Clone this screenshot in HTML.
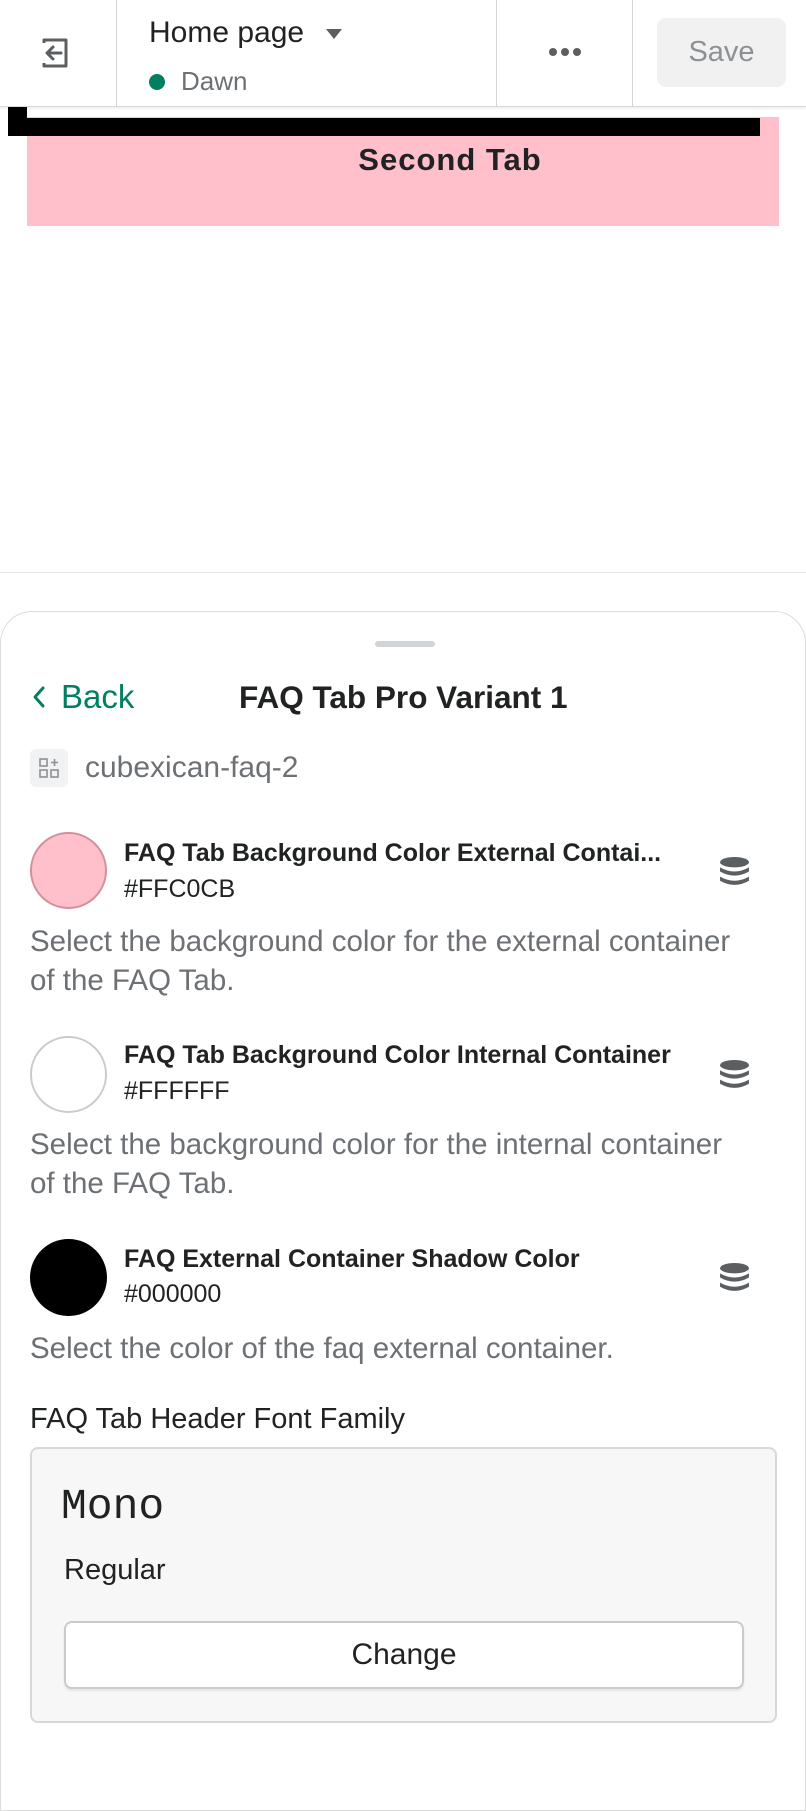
<!DOCTYPE html>
<html><head><meta charset="utf-8"><style>
*{margin:0;padding:0;box-sizing:border-box}
body{width:806px;height:1748px;position:relative;background:#fff;font-family:"Liberation Sans",Arial,sans-serif;overflow:hidden;color:#202223}
.a{position:absolute;white-space:nowrap}
.vl{position:absolute;top:0;width:1px;height:107px;background:#d2d5d8}
.t{font-size:25px;font-weight:bold;color:#202223;line-height:30px}
.h{font-size:25px;color:#202223;line-height:30px}
.d{font-size:29.5px;color:#6d7175;line-height:39px}
.sw{position:absolute;left:30px;width:77px;height:77px;border-radius:50%}
</style></head><body>
<!-- header -->
<div class="a" style="left:0;top:0;width:806px;height:107px;border-bottom:1px solid #d9d9d9;box-shadow:0 1px 3px rgba(0,0,0,.1);background:#fff;z-index:2"></div>
<div class="vl" style="left:116px;z-index:3"></div>
<div class="vl" style="left:496px;z-index:3"></div>
<div class="vl" style="left:632px;z-index:3"></div>
<svg class="a" style="left:40px;top:37px;z-index:3" width="32" height="32" viewBox="0 0 32 32"><path d="M4 6 V3 H26 V29 H4 V26" fill="none" stroke="#5c5f62" stroke-width="3" stroke-linejoin="round"/><path d="M21 16 H8 M13 10 L7 16 L13 22" fill="none" stroke="#5c5f62" stroke-width="3" stroke-linecap="round" stroke-linejoin="round"/></svg>
<div class="a" style="left:149px;top:16px;font-size:30px;line-height:34px;z-index:3">Home page</div>
<svg class="a" style="left:326px;top:29px;z-index:3" width="16" height="10"><path d="M0 0 H16 L8 10Z" fill="#5c5f62"/></svg>
<div class="a" style="left:149px;top:74px;width:16px;height:16px;border-radius:50%;background:#008060;z-index:3"></div>
<div class="a" style="left:181px;top:66px;font-size:26px;line-height:30px;color:#6d7175;z-index:3">Dawn</div>
<svg class="a" style="left:548px;top:47px;z-index:3" width="34" height="10"><circle cx="5" cy="5" r="4" fill="#5c5f62"/><circle cx="17" cy="5" r="4" fill="#5c5f62"/><circle cx="29" cy="5" r="4" fill="#5c5f62"/></svg>
<div class="a" style="left:657px;top:18px;width:129px;height:69px;background:#f1f1f1;border-radius:9px;font-size:29px;color:#8c9196;text-align:center;line-height:69px;z-index:3">Save</div>
<!-- preview -->
<div class="a" style="left:27px;top:117px;width:752px;height:109px;background:#ffc0cb"></div>
<div class="a" style="left:8px;top:107px;width:19px;height:28px;background:#000;z-index:3"></div>
<div class="a" style="left:8px;top:118px;width:752px;height:18px;background:#000"></div>
<div class="a" style="left:0;top:142px;width:900px;text-align:center;font-size:31px;font-weight:bold;letter-spacing:1px;line-height:36px">Second Tab</div>
<div class="a" style="left:0;top:572px;width:806px;height:1px;background:#e1e3e5"></div>
<!-- panel -->
<div class="a" style="left:0;top:611px;width:806px;height:1200px;border:1px solid #dcdcdc;border-radius:32px 32px 0 0;background:#fff"></div>
<div class="a" style="left:375px;top:641px;width:60px;height:6px;border-radius:3px;background:#d2d5d8"></div>
<svg class="a" style="left:32px;top:685px" width="14" height="24"><path d="M11 3 L3 12 L11 21" fill="none" stroke="#008060" stroke-width="3" stroke-linecap="round" stroke-linejoin="round"/></svg>
<div class="a" style="left:61px;top:678px;font-size:33px;line-height:38px;color:#008060">Back</div>
<div class="a" style="left:239px;top:678px;font-size:31.5px;font-weight:bold;line-height:38px">FAQ Tab Pro Variant 1</div>
<div class="a" style="left:30px;top:749px;width:38px;height:38px;border-radius:6px;background:#f1f2f4"></div>
<svg class="a" style="left:38px;top:757px" width="22" height="22" viewBox="0 0 22 22"><g fill="none" stroke="#8c9196" stroke-width="1.6"><rect x="2" y="2" width="7" height="7"/><rect x="2" y="13" width="7" height="7"/><rect x="13" y="13" width="7" height="7"/><path d="M16.5 2 V9 M13 5.5 H20"/></g></svg>
<div class="a" style="left:85px;top:750px;font-size:30px;line-height:36px;color:#6d7175">cubexican-faq-2</div>
<!-- swatch 1 -->
<div class="sw" style="top:832px;background:#ffc0cb;border:2px solid #d38f9b"></div>
<div class="a t" style="left:124px;top:838px">FAQ Tab Background Color External Contai...</div>
<div class="a h" style="left:124px;top:874px">#FFC0CB</div>
<svg class="a" style="left:719px;top:856px" width="31" height="31" viewBox="0 0 30 30"><g fill="#5c5f62"><ellipse cx="15" cy="6" rx="14" ry="5"/><path d="M1 11 Q15 19 29 11 V15 Q15 23 1 15Z"/><path d="M1 20 Q15 28 29 20 V24 Q15 32 1 24Z"/></g></svg>
<div class="a d" style="left:30px;top:922px">Select the background color for the external container<br>of the FAQ Tab.</div>
<!-- swatch 2 -->
<div class="sw" style="top:1036px;background:#fff;border:2px solid #c9cccf"></div>
<div class="a t" style="left:124px;top:1040px">FAQ Tab Background Color Internal Container</div>
<div class="a h" style="left:124px;top:1076px">#FFFFFF</div>
<svg class="a" style="left:719px;top:1059px" width="31" height="31" viewBox="0 0 30 30"><g fill="#5c5f62"><ellipse cx="15" cy="6" rx="14" ry="5"/><path d="M1 11 Q15 19 29 11 V15 Q15 23 1 15Z"/><path d="M1 20 Q15 28 29 20 V24 Q15 32 1 24Z"/></g></svg>
<div class="a d" style="left:30px;top:1125px">Select the background color for the internal container<br>of the FAQ Tab.</div>
<!-- swatch 3 -->
<div class="sw" style="top:1239px;background:#000"></div>
<div class="a t" style="left:124px;top:1244px">FAQ External Container Shadow Color</div>
<div class="a h" style="left:124px;top:1279px">#000000</div>
<svg class="a" style="left:719px;top:1262px" width="31" height="31" viewBox="0 0 30 30"><g fill="#5c5f62"><ellipse cx="15" cy="6" rx="14" ry="5"/><path d="M1 11 Q15 19 29 11 V15 Q15 23 1 15Z"/><path d="M1 20 Q15 28 29 20 V24 Q15 32 1 24Z"/></g></svg>
<div class="a d" style="left:30px;top:1329px">Select the color of the faq external container.</div>
<!-- font picker -->
<div class="a" style="left:30px;top:1402px;font-size:29px;line-height:34px">FAQ Tab Header Font Family</div>
<div class="a" style="left:30px;top:1447px;width:747px;height:276px;background:#f7f7f7;border:2px solid #d6d8da;border-radius:8px"></div>
<div class="a" style="left:61px;top:1483px;font-family:'Liberation Mono','DejaVu Sans Mono',monospace;font-size:43px;line-height:48px">Mono</div>
<div class="a" style="left:64px;top:1553px;font-size:29px;line-height:34px">Regular</div>
<div class="a" style="left:64px;top:1621px;width:680px;height:68px;background:#fff;border:2px solid #c9cccf;border-radius:8px;box-shadow:0 2px 2px rgba(0,0,0,.08);text-align:center;line-height:64px;font-size:30px">Change</div>
</body></html>
